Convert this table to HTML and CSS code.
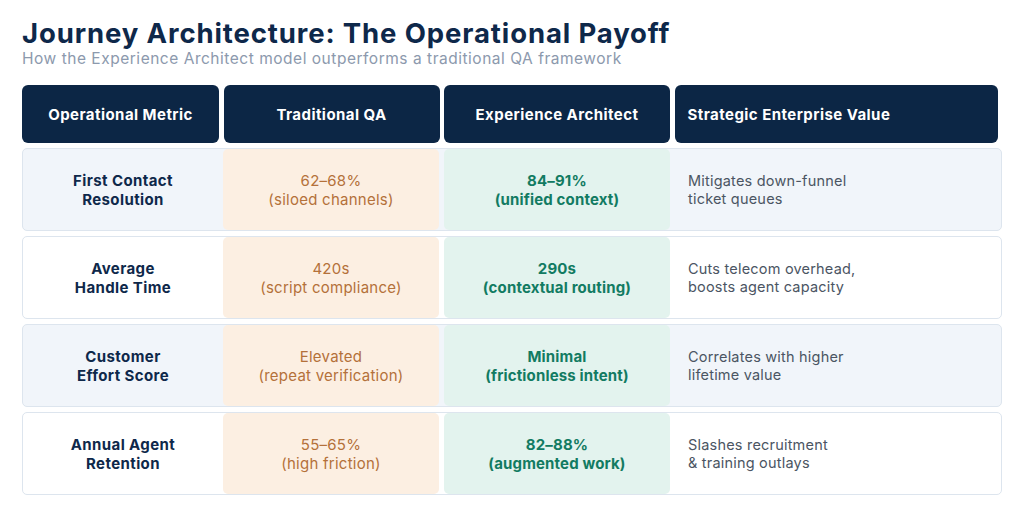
FILE: index.html
```html
<!DOCTYPE html>
<html lang="en">
<head>
<meta charset="utf-8">
<title>Journey Architecture: The Operational Payoff</title>
<link rel="stylesheet" href="styles.css">
</head>
<body>
<main class="page">
  <header class="intro">
    <h1 class="title">Journey Architecture: The Operational Payoff</h1>
    <p class="subtitle">How the Experience Architect model outperforms a traditional QA framework</p>
  </header>
  <div class="table">
    <div class="head">
      <div class="hcell center">Operational Metric</div>
      <div class="hcell center">Traditional QA</div>
      <div class="hcell center">Experience Architect</div>
      <div class="hcell left">Strategic Enterprise Value</div>
    </div>
    <div class="row tint">
      <div class="cell metric">First Contact<br>Resolution</div>
      <div class="cell trad">62–68%<br>(siloed channels)</div>
      <div class="cell arch">84–91%<br>(unified context)</div>
      <div class="cell value">Mitigates down-funnel<br>ticket queues</div>
    </div>
    <div class="row">
      <div class="cell metric">Average<br>Handle Time</div>
      <div class="cell trad">420s<br>(script compliance)</div>
      <div class="cell arch">290s<br>(contextual routing)</div>
      <div class="cell value">Cuts telecom overhead,<br>boosts agent capacity</div>
    </div>
    <div class="row tint">
      <div class="cell metric">Customer<br>Effort Score</div>
      <div class="cell trad">Elevated<br>(repeat verification)</div>
      <div class="cell arch">Minimal<br>(frictionless intent)</div>
      <div class="cell value">Correlates with higher<br>lifetime value</div>
    </div>
    <div class="row">
      <div class="cell metric">Annual Agent<br>Retention</div>
      <div class="cell trad">55–65%<br>(high friction)</div>
      <div class="cell arch">82–88%<br>(augmented work)</div>
      <div class="cell value">Slashes recruitment<br>&amp; training outlays</div>
    </div>
  </div>
</main>
</body>
</html>
```
FILE: styles.css
```css
* { box-sizing: border-box; }
html, body { margin: 0; padding: 0; background: #ffffff; }
body { font-family: "Inter", "Noto Sans", sans-serif; }

.page {
  width: 1024px;
  height: 522px;
  padding: 16px 22px 0 22px;
}

.title {
  margin: 0;
  font-size: 27.5px;
  line-height: 34px;
  font-weight: 700;
  color: #0e284a;
  letter-spacing: 0.88px;
}
.subtitle {
  margin: 0;
  font-size: 15.5px;
  line-height: 18px;
  color: #8c99ad;
  font-weight: 400;
  letter-spacing: 0.52px;
}

.table {
  margin-top: 17px;
  display: flex;
  flex-direction: column;
  gap: 5px;
}

.head {
  display: grid;
  grid-template-columns: 197px 216px 226px 323px;
  column-gap: 4.5px;
  height: 58px;
}
.hcell {
  background: #0c2645;
  color: #ffffff;
  border-radius: 6px;
  font-weight: 700;
  font-size: 15px;
  letter-spacing: 0.45px;
  display: flex;
  align-items: center;
}
.hcell.center { justify-content: center; }
.hcell.left { padding-left: 13px; }

.row {
  width: 980px;
  height: 83px;
  border: 1px solid #dde5ee;
  border-radius: 5px;
  background: #ffffff;
  display: grid;
  grid-template-columns: 200px 216px 231px 1fr;
}
.row.tint { background: #f1f5fa; }

.cell {
  display: flex;
  align-items: center;
  font-size: 15px;
  line-height: 19px;
}
.metric {
  justify-content: center;
  text-align: center;
  font-weight: 700;
  color: #0e284a;
  letter-spacing: 0.4px;
}
.trad {
  justify-content: center;
  text-align: center;
  background: #fcefe2;
  color: #b4713a;
  border-radius: 5px;
  letter-spacing: 0.25px;
}
.arch {
  justify-content: center;
  text-align: center;
  background: #e3f3ee;
  color: #127b62;
  font-weight: 700;
  border-radius: 5px;
  margin-left: 5px;
  letter-spacing: 0.15px;
}
.value {
  padding-left: 18px;
  color: #4b5563;
  font-size: 14.5px;
  line-height: 18px;
  letter-spacing: 0.2px;
}
```
